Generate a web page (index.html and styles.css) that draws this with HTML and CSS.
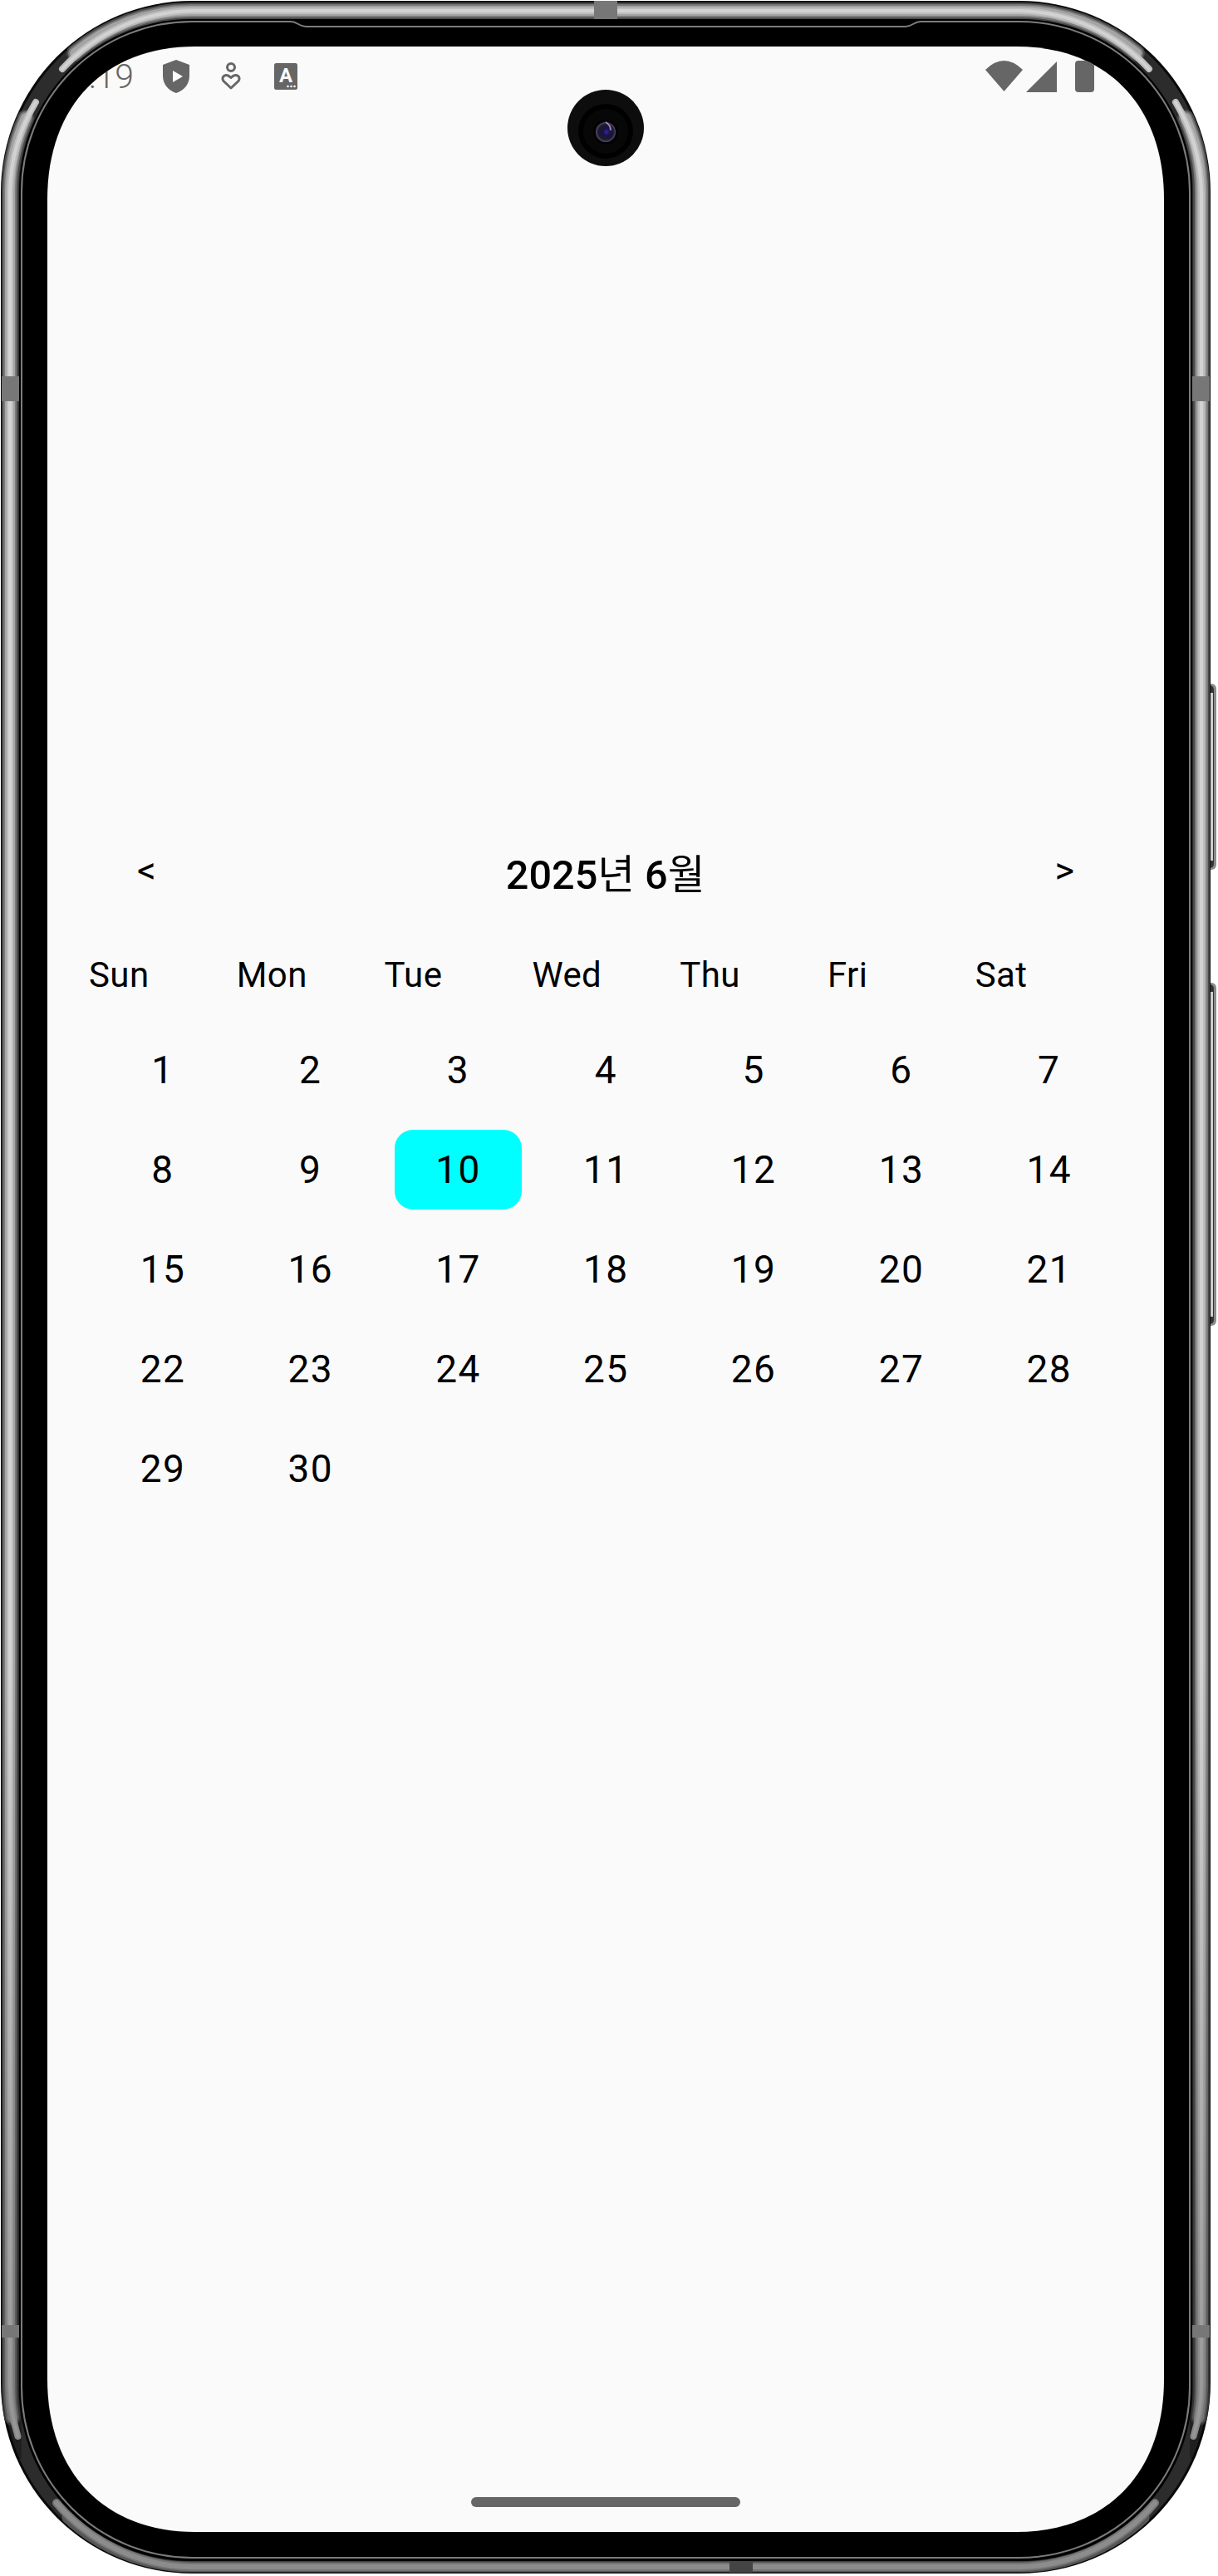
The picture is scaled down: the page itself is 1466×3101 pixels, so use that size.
FILE: index.html
```html
<!DOCTYPE html>
<html lang="ko">
<head>
    <meta charset="utf-8">
    <title>Calendar</title>
    <link rel="stylesheet" href="styles.css">
</head>
<body>
    <div class="device">
        <!-- phone body: drawn as strokes behind the screen -->
        <svg class="frame" width="1466" height="3101" viewBox="0 0 1466 3101">
            <defs>
                <path id="topLong" d="M75 83A218 218 0 0 1 230 13H1228A218 218 0 0 1 1383 83"/>
                <path id="topShort" d="M90 64A218 218 0 0 1 230 13H1228A218 218 0 0 1 1368 64"/>
                <path id="leftLong" d="M43 123A218 218 0 0 0 12 231V2872A218 218 0 0 0 21.5 2933"/>
                <path id="leftShort" d="M31 142A218 218 0 0 0 12 231V2872A218 218 0 0 0 15 2910"/>
                <path id="rightLong" d="M1415 123A218 218 0 0 1 1446 231V2872A218 218 0 0 1 1436.5 2933"/>
                <path id="rightShort" d="M1427 142A218 218 0 0 1 1446 231V2872A218 218 0 0 1 1443 2910"/>
                <path id="bottomLong" d="M68 3013A218 218 0 0 0 230 3090H1228A218 218 0 0 0 1390 3013"/>
                <path id="bottomShort" d="M81 3031A218 218 0 0 0 230 3090H1228A218 218 0 0 0 1377 3031"/>
                <linearGradient id="sideFade" x1="0" y1="0" x2="0" y2="1">
                    <stop offset="0" stop-color="#000" stop-opacity="0"/>
                    <stop offset="1" stop-color="#000" stop-opacity="0.3"/>
                </linearGradient>
                <clipPath id="bodyClip">
                    <rect x="1" y="1" width="1456" height="3097" rx="230"/>
                </clipPath>
            </defs>

            <rect class="side-btn" x="1448" y="823" width="16" height="224" rx="6"/>
            <rect class="side-btn" x="1448" y="1183" width="16" height="413" rx="6"/>
            <rect class="side-cap" x="1448" y="825" width="13" height="220" rx="5"/>
            <rect class="side-cap" x="1448" y="1185" width="13" height="409" rx="5"/>
            <rect class="side-light" x="1448" y="834" width="12" height="202"/>
            <rect class="side-light" x="1448" y="1194" width="12" height="391"/>

            <rect class="body-outer" x="1" y="1" width="1456" height="3097" rx="230"/>
            <rect class="body-mid" x="4" y="4" width="1450" height="3091" rx="227"/>

            <g class="rail w20"><use href="#topShort"/><use href="#leftShort"/><use href="#rightShort"/></g>
            <g class="rail w16"><use href="#topShort"/><use href="#leftShort"/><use href="#rightShort"/></g>
            <g class="rail w12"><use href="#topShort"/><use href="#leftShort"/><use href="#rightShort"/></g>
            <g class="rail w8"><use href="#topLong"/><use href="#leftLong"/><use href="#rightLong"/></g>
            <g class="rail w4"><use href="#topLong"/><use href="#leftLong"/><use href="#rightLong"/></g>
            <g clip-path="url(#bodyClip)">
                <rect x="1" y="2000" width="25" height="960" fill="url(#sideFade)"/>
                <rect x="1432" y="2000" width="26" height="960" fill="url(#sideFade)"/>
            </g>

            <g class="rail b13"><use href="#bottomShort"/></g>
            <g class="rail b10"><use href="#bottomLong"/></g>
            <g class="rail b6"><use href="#bottomLong"/></g>

            <rect class="body-inner" x="23" y="23" width="1412" height="3060" rx="207"/>
            <path class="inner-line" d="M26 231A205 205 0 0 1 231 26H350C358 26 360 32 368 32H1090C1098 32 1100 26 1108 26H1227A205 205 0 0 1 1432 231V2874A205 205 0 0 1 1227 3079H231A205 205 0 0 1 26 2874Z"/>

            <rect class="band" x="2" y="453" width="21" height="30"/>
            <rect class="band" x="1435" y="453" width="21" height="30"/>
            <rect class="band" x="2" y="2799" width="21" height="15"/>
            <rect class="band" x="1435" y="2799" width="21" height="15"/>
            <rect class="band" x="715" y="1" width="28" height="22"/>
            <rect class="band-dark" x="878" y="3083" width="28" height="14"/>
        </svg>

        <div class="screen">
            <div class="status-bar">
                <div class="status-left">
                    <span class="time">3:19</span>
                    <svg class="icon-shield" width="34" height="42" viewBox="0 0 34 42">
                        <path class="ic" d="M17 1L33 7V20C33 31 26 38 17 41C8 38 1 31 1 20V7Z"/>
                        <path class="ic-light" d="M13 14L25 21L13 28Z"/>
                    </svg>
                    <svg class="icon-care" width="24" height="34" viewBox="0 0 24 34">
                        <circle class="ic-line" cx="12" cy="6" r="4.5"/>
                        <path class="ic-line" d="M12 31L3 22.5C1 20 2 15.5 6.5 15.5C9 15.5 10.5 17 12 18.5C13.5 17 15 15.5 17.5 15.5C22 15.5 23 20 21 22.5Z"/>
                    </svg>
                    <svg class="icon-text" width="28" height="32" viewBox="0 0 28 32">
                        <rect class="ic" width="28" height="32" rx="2.5"/>
                        <text class="ic-letter" x="14" y="23" text-anchor="middle">A</text>
                        <circle class="ic-light" cx="16.5" cy="28" r="1.3"/>
                        <circle class="ic-light" cx="20.5" cy="28" r="1.3"/>
                        <circle class="ic-light" cx="24.5" cy="28" r="1.3"/>
                    </svg>
                </div>
                <div class="status-right">
                    <svg width="45" height="38" viewBox="0 0 45 38">
                        <path class="ic" d="M0 11Q22.500 -11 45 11L22.500 37Z"/>
                    </svg>
                    <svg class="icon-signal" width="37" height="37" viewBox="0 0 37 37">
                        <path class="ic" d="M0 37H37V0Z"/>
                    </svg>
                    <svg class="icon-battery" width="23" height="38" viewBox="0 0 23 38">
                        <rect class="ic" width="23" height="38" rx="4"/>
                    </svg>
                </div>
            </div>

            <div class="camera">
                <svg width="92" height="92" viewBox="0 0 92 92">
                    <defs>
                        <radialGradient id="lens" cx="0.5" cy="0.5" r="0.5" fx="0.55" fy="0.5">
                            <stop offset="0" stop-color="#3a22b8"/>
                            <stop offset="0.35" stop-color="#171540"/>
                            <stop offset="0.75" stop-color="#1a1a2c"/>
                            <stop offset="1" stop-color="#5a4a70"/>
                        </radialGradient>
                    </defs>
                    <circle cx="46" cy="46" r="46" fill="#0d0d0d"/>
                    <circle cx="46" cy="50" r="33" fill="#000"/>
                    <circle cx="46" cy="50" r="27" fill="#070707"/>
                    <circle cx="46" cy="51" r="15" fill="#020202"/>
                    <circle cx="46" cy="51" r="12" fill="url(#lens)"/>
                    <path class="lens-glint" d="M46 39A12 12 0 0 1 52 49A12 12 0 0 0 46 39Z"/>
                </svg>
            </div>

            <div class="calendar">
                <div class="cal-header">
                    <span class="nav">&lt;</span>
                    <span class="cal-title">2025<span class="cal-ko">년</span> 6<span class="cal-ko">월</span></span>
                    <span class="nav">&gt;</span>
                </div>

                <div class="week-row">
                    <span>Sun</span>
                    <span>Mon</span>
                    <span>Tue</span>
                    <span>Wed</span>
                    <span>Thu</span>
                    <span>Fri</span>
                    <span>Sat</span>
                </div>

                <div class="day-grid">
                    <div class="day">1</div>
                    <div class="day">2</div>
                    <div class="day">3</div>
                    <div class="day">4</div>
                    <div class="day">5</div>
                    <div class="day">6</div>
                    <div class="day">7</div>
                    <div class="day">8</div>
                    <div class="day">9</div>
                    <div class="day selected">10</div>
                    <div class="day">11</div>
                    <div class="day">12</div>
                    <div class="day">13</div>
                    <div class="day">14</div>
                    <div class="day">15</div>
                    <div class="day">16</div>
                    <div class="day">17</div>
                    <div class="day">18</div>
                    <div class="day">19</div>
                    <div class="day">20</div>
                    <div class="day">21</div>
                    <div class="day">22</div>
                    <div class="day">23</div>
                    <div class="day">24</div>
                    <div class="day">25</div>
                    <div class="day">26</div>
                    <div class="day">27</div>
                    <div class="day">28</div>
                    <div class="day">29</div>
                    <div class="day">30</div>
                </div>
            </div>

            <div class="home-bar"></div>
        </div>
    </div>
</body>
</html>
```

FILE: styles.css
```css
body {
    margin: 0;
    background-color: #fff;
    font-family: Roboto, "Noto Sans CJK KR", sans-serif;
    color: #000;
}

.device {
    position: relative;
    width: 1466px;
    height: 3101px;
    padding: 56px 65px 53px 57px;
    box-sizing: border-box;
    overflow: hidden;
}

/* phone body */
.frame {
    position: absolute;
    top: 0;
    left: 0;
}

.body-outer { fill: #0a0a0a; }
.body-mid { fill: #2c2c2c; }
.body-inner { fill: #000; }

.rail {
    fill: none;
    stroke-linecap: round;
}
.w20 { stroke: #4a4a4a; stroke-width: 20px; }
.w16 { stroke: #7a7a7a; stroke-width: 16px; }
.w12 { stroke: #a4a4a4; stroke-width: 12px; }
.w8 { stroke: #bdbdbd; stroke-width: 8px; }
.w4 { stroke: #d2d2d2; stroke-width: 4px; }
.b13 { stroke: #555; stroke-width: 13px; }
.b10 { stroke: #757575; stroke-width: 10px; }
.b6 { stroke: #8c8c8c; stroke-width: 6px; }

.inner-line {
    fill: none;
    stroke: #7c7c7c;
    stroke-width: 2px;
}

.band { fill: #777; }
.band-dark { fill: #444; }
.side-btn { fill: #8a8a8a; }
.side-cap { fill: #333; }
.side-light { fill: #cfcfcf; }

/* screen */
.screen {
    position: relative;
    display: flex;
    flex-direction: column;
    width: 1344px;
    height: 2992px;
    clip-path: path("M0 184C0 70 70 0 178 0H1166C1274 0 1344 70 1344 184V2808C1344 2922 1274 2992 1166 2992H178C70 2992 0 2922 0 2808Z");
    background-color: #fafafa;
}

.status-bar {
    display: flex;
    justify-content: space-between;
    align-items: center;
    height: 72px;
    padding-right: 84px;
}

.status-left,
.status-right {
    display: flex;
    align-items: center;
}

.time {
    width: 104px;
    text-align: right;
    font-size: 41px;
    font-weight: 300;
    color: #666;
}

.icon-shield { margin-left: 34px; }
.icon-care { margin-left: 37px; }
.icon-text { margin-left: 40px; }
.icon-signal { margin-left: 4px; }
.icon-battery { margin-left: 22px; }

.ic { fill: #666; stroke-linejoin: round; }
.ic-light { fill: #fafafa; }
.ic-line {
    fill: none;
    stroke: #666;
    stroke-width: 3px;
    stroke-linejoin: round;
}
.ic-letter {
    fill: #fafafa;
    font-size: 24px;
    font-weight: 700;
}

.camera {
    position: absolute;
    top: 52px;
    left: 626px;
    width: 92px;
    height: 92px;
}

.lens-glint {
    fill: none;
    stroke: #a080c8;
    stroke-width: 2px;
}

/* calendar */
.calendar {
    margin-top: 892px;
}

.cal-header {
    display: flex;
    justify-content: space-between;
    align-items: center;
    height: 60px;
    padding: 0 108px;
}

.nav {
    font-size: 45px;
    font-weight: 380;
    line-height: 40px;
    margin-top: -4px;
}

.cal-title {
    font-size: 48.6px;
    font-weight: 480;
    margin-top: -3px;
}

.cal-ko {
    font-weight: 400;
}

.week-row {
    display: grid;
    grid-template-columns: repeat(7, 177.8px);
    align-items: center;
    height: 50px;
    margin-top: 68px;
    padding-left: 50px;
    font-size: 42px;
    font-weight: 385;
    letter-spacing: 0.4px;
}

.day-grid {
    display: grid;
    grid-template-columns: repeat(7, 177.8px);
    grid-auto-rows: 96px;
    row-gap: 24px;
    margin-top: 42px;
    padding-left: 50px;
}

.day {
    display: flex;
    justify-content: center;
    align-items: center;
    margin: 0 12px;
    font-size: 46px;
    font-weight: 385;
    letter-spacing: 1.4px;
}

.selected {
    border-radius: 22px;
    background-color: #0ff;
}

.home-bar {
    align-self: center;
    width: 324px;
    height: 12px;
    margin-top: auto;
    margin-bottom: 30px;
    border-radius: 6px;
    background-color: #666;
}
```
